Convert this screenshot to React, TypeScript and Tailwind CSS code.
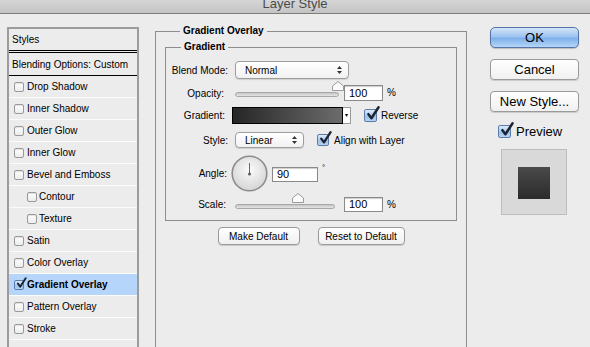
import React from "react";

const font = "font-['Liberation_Sans',Arial,sans-serif]";

function Check({ size = 12, checked = false, blue = false }: { size?: number; checked?: boolean; blue?: boolean }) {
  return (
    <span
      className={
        "relative inline-block shrink-0 rounded-[2px] border " +
        (checked || blue
          ? "border-[#5a7cab] bg-[linear-gradient(#dfeafb,#9fc1ea_60%,#b8d3f4)]"
          : "border-[#9a9a9a] bg-[linear-gradient(#ffffff,#ececec)] shadow-[inset_0_1px_1px_rgba(0,0,0,0.12)]")
      }
      style={{ width: size, height: size }}
    >
      {checked && (
        <svg
          viewBox="0 0 12 12"
          className="absolute left-[1px] top-[-3px] overflow-visible"
          style={{ width: size, height: size }}
        >
          <path d="M2.2 6.6 L5 10.4 L11.6 0.2" fill="none" stroke="#1b2433" strokeWidth="2.3" strokeLinecap="round" strokeLinejoin="round" />
        </svg>
      )}
    </span>
  );
}

function Arrows() {
  return (
    <svg width="5" height="8" viewBox="0 0 5 8" className="shrink-0">
      <polygon points="0,3 2.5,0 5,3" fill="#333" />
      <polygon points="0,5 2.5,8 5,5" fill="#333" />
    </svg>
  );
}

function Select({ value, width, height }: { value: string; width: number; height: number }) {
  return (
    <div
      className="flex items-center justify-between rounded-[4px] border border-[#9d9d9d] bg-[linear-gradient(#ffffff,#f1f1f1)] pl-[9px] pr-[6px] shadow-[0_1px_1px_rgba(0,0,0,0.12)]"
      style={{ width, height }}
    >
      <span>{value}</span>
      <Arrows />
    </div>
  );
}

function Thumb() {
  return (
    <svg width="12" height="10" viewBox="0 0 12 10" className="absolute top-[-6px] overflow-visible">
      <polygon points="0.5,9.5 0.5,5 6,0.5 11.5,5 11.5,9.5" fill="#fafafa" stroke="#9a9a9a" strokeWidth="1" />
    </svg>
  );
}

function Slider({ width, thumb }: { width: number; thumb: number }) {
  return (
    <div className="relative h-[5px] rounded-full border border-[#a8a8a8] bg-[linear-gradient(#c4c4c4,#e6e6e6)]" style={{ width }}>
      <div className="absolute top-[-6px]" style={{ left: thumb }}>
        <Thumb />
      </div>
    </div>
  );
}

function Field({ value, width, height }: { value: string; width: number; height: number }) {
  return (
    <div
      className="flex items-center border border-[#8a8a8a] bg-white pl-[4px] text-[11px] shadow-[inset_0_1px_1px_rgba(0,0,0,0.2)]"
      style={{ width, height }}
    >
      {value}
    </div>
  );
}

function Label({ text, width }: { text: string; width: number }) {
  return (
    <span className="shrink-0 text-right" style={{ width }}>
      {text}
    </span>
  );
}

function Button({ children, primary, className }: { children: React.ReactNode; primary?: boolean; className?: string }) {
  return (
    <div
      className={
        "flex items-center justify-center border " +
        (primary
          ? "rounded-[5px] border-[#5573a6] bg-[linear-gradient(#d3e5fa,#9dc3ef_45%,#7fb0ea_55%,#b5d6f7)] shadow-[0_1px_1px_rgba(0,0,0,0.2)]"
          : "rounded-[4px] border-[#9a9a9a] bg-[linear-gradient(#ffffff,#f0f0f0)] shadow-[0_1px_1px_rgba(0,0,0,0.15)]") +
        " " +
        (className ?? "")
      }
    >
      {children}
    </div>
  );
}

const styles: { label: string; indent?: boolean; checked?: boolean }[] = [
  { label: "Drop Shadow" },
  { label: "Inner Shadow" },
  { label: "Outer Glow" },
  { label: "Inner Glow" },
  { label: "Bevel and Emboss" },
  { label: "Contour", indent: true },
  { label: "Texture", indent: true },
  { label: "Satin" },
  { label: "Color Overlay" },
  { label: "Gradient Overlay", checked: true },
  { label: "Pattern Overlay" },
  { label: "Stroke" },
  { label: "" },
];

export default function App() {
  return (
    <div className={`${font} relative h-[347px] w-[590px] overflow-hidden bg-[#ececec] text-[10px] text-black`}>
      {/* title bar */}
      <div className="flex h-[14px] justify-center overflow-hidden border-b border-[#7d7d7d] bg-[linear-gradient(#d6d6d6,#c4c4c4)]">
        <span className="mt-[-3px] text-[13px] leading-[13px] text-[#4a4a4a]">Layer Style</span>
      </div>

      <div className="flex">
        {/* styles list */}
        <div className="ml-[7px] mt-[13px] h-[400px] w-[132px] shrink-0 border-x-2 border-t-2 border-[#9c9c9c]">
          <div className="flex h-[22px] items-center border-b border-black pl-[3px]">Styles</div>
          <div className="mt-[1px] flex h-[24px] items-center border-y border-black pl-[3px]">Blending Options: Custom</div>
          {styles.map((s, i) => (
            <div
              key={i}
              className={
                "flex h-[22px] items-center border-b border-[#fbfbfb] " +
                (s.indent ? "pl-[18px] " : "pl-[5px] ") +
                (s.checked ? "bg-[#b6d5fb] font-bold" : "")
              }
            >
              {s.label && (
                <>
                  <Check size={10} checked={s.checked} />
                  <span className={s.indent ? "ml-[2px]" : "ml-[3px]"}>{s.label}</span>
                </>
              )}
            </div>
          ))}
        </div>

        {/* gradient overlay */}
        <fieldset className="ml-[16px] mt-[11px] h-[400px] w-[312px] shrink-0 border border-[#8e8e8e] px-[9px]">
          <legend className="ml-[15px] px-[3px] font-bold leading-[12px]">Gradient Overlay</legend>

          <fieldset className="mt-[4px] border border-[#8e8e8e] pb-[8px]">
            <legend className="ml-[15px] px-[3px] font-bold leading-[12px]">Gradient</legend>

            <div className="mt-[8px] flex h-[18px] items-center">
              <Label text="Blend Mode:" width={62} />
              <div className="ml-[7px]">
                <Select value="Normal" width={114} height={18} />
              </div>
            </div>

            <div className="mt-[6px] flex h-[16px] items-center">
              <Label text="Opacity:" width={58} />
              <div className="ml-[11px] pt-[2px]">
                <Slider width={104} thumb={96} />
              </div>
              <div className="ml-[5px]">
                <Field value="100" width={39} height={16} />
              </div>
              <span className="ml-[4px] self-start">%</span>
            </div>

            <div className="mt-[6px] flex h-[17px] items-center">
              <Label text="Gradient:" width={59} />
              <div className="ml-[7px] flex h-[17px]">
                <div className="h-full w-[111px] border border-black bg-[linear-gradient(90deg,#262626,#6c6c6c)]" />
                <div className="flex h-full w-[8px] items-center justify-center border-y border-r border-[#9a9a9a] bg-white text-[6px]">
                  ▾
                </div>
              </div>
              <div className="ml-[13px] flex items-center">
                <Check size={13} checked blue />
                <span className="ml-[4px]">Reverse</span>
              </div>
            </div>

            <div className="mt-[8px] flex h-[16px] items-center">
              <Label text="Style:" width={62} />
              <div className="ml-[7px]">
                <Select value="Linear" width={69} height={16} />
              </div>
              <div className="ml-[13px] flex items-center">
                <Check size={12} checked blue />
                <span className="ml-[5px]">Align with Layer</span>
              </div>
            </div>

            <div className="mt-[7px] flex h-[37px] items-center">
              <Label text="Angle:" width={61} />
              <svg width="37" height="37" viewBox="0 0 37 37" className="ml-[4px] shrink-0">
                <defs>
                  <radialGradient id="dial" cx="50%" cy="40%" r="60%">
                    <stop offset="0%" stopColor="#fbfbfb" />
                    <stop offset="100%" stopColor="#d4d4d4" />
                  </radialGradient>
                </defs>
                <circle cx="18.5" cy="18.5" r="17.3" fill="url(#dial)" stroke="#8c8c8c" strokeWidth="1.6" />
                <line x1="18.5" y1="8" x2="18.5" y2="19" stroke="#6a6a6a" strokeWidth="1" />
                <circle cx="18.5" cy="19" r="1.5" fill="#5a5a5a" />
              </svg>
              <div className="ml-[4px] mt-[2px]">
                <Field value="90" width={46} height={15} />
              </div>
              <span className="ml-[4px] mb-[12px] text-[8px]">°</span>
            </div>

            <div className="mt-[5px] flex h-[15px] items-center">
              <Label text="Scale:" width={60} />
              <div className="ml-[9px] pt-[3px]">
                <Slider width={100} thumb={56} />
              </div>
              <div className="ml-[9px]">
                <Field value="100" width={39} height={15} />
              </div>
              <span className="ml-[4px] self-start">%</span>
            </div>
          </fieldset>

          <div className="mt-[6px] flex justify-center gap-[18px]">
            <Button className="h-[18px] w-[82px]">Make Default</Button>
            <Button className="h-[18px] w-[87px]">Reset to Default</Button>
          </div>
        </fieldset>

        {/* buttons + preview */}
        <div className="ml-[23px] mt-[13px] flex w-[89px] shrink-0 flex-col text-[13px]">
          <Button primary className="h-[21px]">OK</Button>
          <Button className="mt-[11px] h-[21px]">Cancel</Button>
          <Button className="mt-[11px] h-[21px]">New Style...</Button>
          <div className="ml-[8px] mt-[10px] flex items-center">
            <Check size={13} checked blue />
            <span className="ml-[5px]">Preview</span>
          </div>
          <div className="ml-[11px] mt-[7px] flex h-[66px] w-[66px] items-start border border-[#bdbdbd] bg-[#d9d9d9] pl-[16px] pt-[17px]">
            <div className="h-[32px] w-[32px] bg-[linear-gradient(#4a4a4a,#2b2b2b)]" />
          </div>
        </div>
      </div>
    </div>
  );
}
